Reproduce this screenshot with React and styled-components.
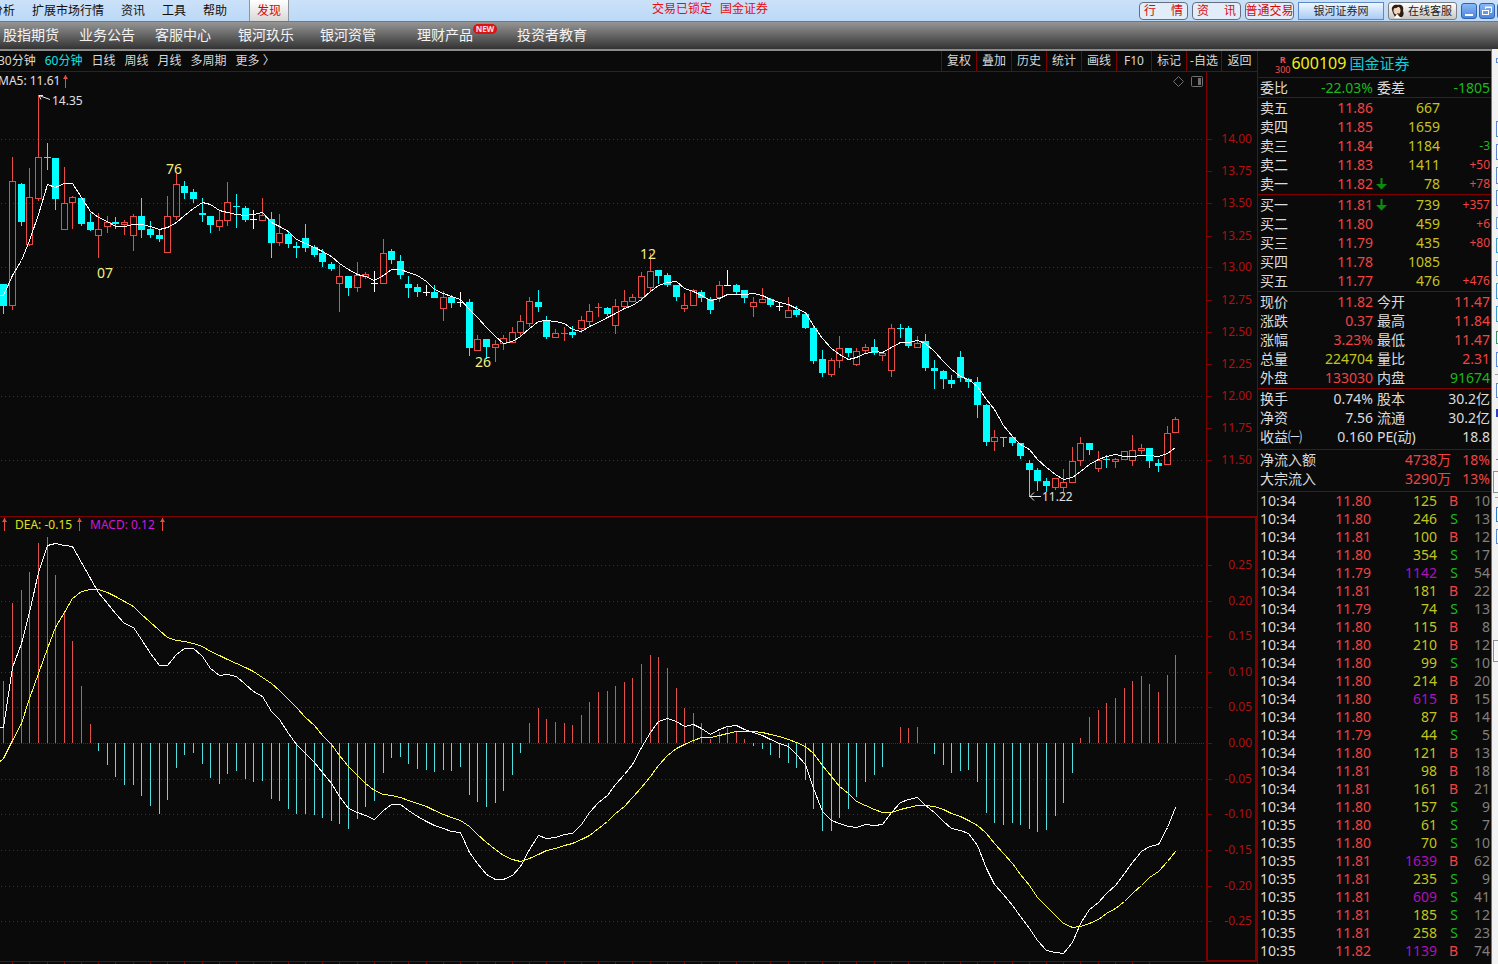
import React from 'react';
import styled, { createGlobalStyle } from 'styled-components';

const GlobalStyle = createGlobalStyle`
  * { box-sizing: border-box; }
  body {
    margin: 0;
    overflow: hidden;
    background: #0a0a0a;
    font-family: 'Noto Sans', 'Noto Sans CJK SC', sans-serif;
    font-size: 12px;
  }
  button { font-family: inherit; cursor: pointer; }
  a { color: inherit; text-decoration: none; }
`;

const Page = styled.div`
  display: flex;
  flex-direction: column;
  height: 100vh;
  overflow: hidden;
`;

/* ---------- top menu ---------- */

const MenuBar = styled.header`
  display: flex;
  flex: none;
  height: 22px;
  color: #101010;
  line-height: 21px;
  white-space: nowrap;
  background: linear-gradient(#cbe1f9, #bcd9f7);
  border-bottom: 1px solid #6f7780;
`;

const MenuList = styled.nav`
  display: flex;
  gap: 17px;
  margin-left: -9px;
`;

const DiscoverTab = styled.a`
  margin-left: 22px;
  padding: 0 7px;
  color: #e00000;
  background: linear-gradient(#ffffff, #d8d8d8);
  border: solid #8c949c;
  border-width: 0 1px;
`;

const Notice = styled.div`
  display: flex;
  flex: 1;
  justify-content: center;
  gap: 8px;
  padding-right: 8px;
  color: #e80c0c;
  line-height: 18px;
`;

const QuickActions = styled.div`
  display: flex;
  align-items: center;
  gap: 4px;
  margin-right: -15px;
`;

const PillButton = styled.button`
  display: flex;
  justify-content: ${p => p.$spread ? 'space-between' : 'center'};
  align-items: center;
  width: 49px;
  height: 18px;
  padding: 0 ${p => p.$spread ? 4 : 0}px;
  color: #d80808;
  font-size: 12px;
  line-height: 16px;
  background: #e2edf9;
  border: 1px solid #66707c;
  border-radius: 4px;
`;

const SiteButton = styled.button`
  width: 86px;
  height: 18px;
  padding: 0;
  color: #1c2430;
  font-size: 11px;
  line-height: 16px;
  background: linear-gradient(#f0f7ff, #a9cbf5);
  border: 1px solid #5b8ac6;
`;

const ServiceButton = styled.button`
  display: flex;
  align-items: center;
  gap: 3px;
  width: 69px;
  height: 18px;
  padding: 0 2px;
  color: #202020;
  font-size: 11px;
  line-height: 16px;
  background: linear-gradient(#ffffff, #c8c8c4);
  border: 1px solid #7c8084;
  border-radius: 3px;
`;

const WindowButtons = styled.div`
  display: flex;
  gap: 2px;
`;

const WindowButton = styled.button`
  width: 16px;
  height: 16px;
  padding: 0;
  line-height: 0;
  background: linear-gradient(#8ab8f4, #4a86dc);
  border: 1px solid #2f62b4;
  border-radius: 3px;
`;

/* ---------- broker navigation ---------- */

const BrokerNav = styled.nav`
  display: flex;
  flex: none;
  height: 29px;
  padding-left: 3px;
  color: #f4f4f4;
  font-size: 14px;
  line-height: 26px;
  white-space: nowrap;
  background: linear-gradient(#969696, #333333);
  border-bottom: 2px solid #8a8a8a;
`;

const BrokerLink = styled.a`
  position: relative;
  margin-right: ${p => p.$gap}px;
`;

const NewBadge = styled.span`
  position: absolute;
  left: 100%;
  top: 2px;
  width: 24px;
  height: 10px;
  color: #ffe0e0;
  font-size: 8px;
  font-weight: 700;
  line-height: 10px;
  text-align: center;
  background: #d81414;
  border-radius: 5px;
`;

/* ---------- body ---------- */

const Body = styled.main`
  display: flex;
  flex: 1;
  min-height: 0;
`;

const ChartColumn = styled.section`
  flex: 1;
  min-width: 0;
`;

const ChartBar = styled.div`
  display: flex;
  justify-content: space-between;
  height: 21px;
  color: #d8d8d8;
  border-bottom: 1px solid #800000;
`;

const Periods = styled.div`
  display: flex;
  gap: 9px;
  margin-left: -2px;
`;

const PeriodButton = styled.button`
  padding: 0;
  color: ${p => p.$active ? '#10e0e0' : 'inherit'};
  font-size: 12px;
  line-height: 20px;
  white-space: nowrap;
  background: none;
  border: 0;
`;

const Tools = styled.div`
  display: flex;
`;

const ToolButton = styled.button`
  width: 35px;
  padding: 0;
  color: #d8d8d8;
  font-size: 12px;
  line-height: 20px;
  white-space: nowrap;
  background: none;
  border: 0;
  border-left: 1px solid #800000;
  &:last-child { width: 36px; }
`;

const Chart = styled.svg`
  display: block;
  width: 100%;
  height: auto;
`;

/* ---------- quote panel ---------- */

const colors = {
  red: '#f04444',
  green: '#1cb81c',
  yellow: '#c4c41c',
  purple: '#b010b8',
  white: '#dcdcdc',
  gray: '#808080'
};

const QuotePanel = styled.aside`
  flex: none;
  width: 234px;
  overflow: hidden;
  font-size: 14px;
  border-left: 1px solid #800000;
`;

const QuoteTitle = styled.h1`
  display: flex;
  align-items: center;
  gap: 3px;
  height: 27px;
  margin: 0;
  padding: 0 0 2px 17px;
  color: #f0f018;
  font-size: 16px;
  font-weight: 400;
  line-height: 24px;
  border-bottom: 1px solid #800000;
`;

const MarginMark = styled.small`
  display: flex;
  flex-direction: column;
  align-items: center;
  margin-right: -2px;
  padding-top: 4px;
  color: #f05050;
  font-size: 9px;
  line-height: 10px;
`;

const StockName = styled.span`
  color: #10ccd8;
  font-size: 15px;
`;

const Block = styled.div`
  padding: 0 1px ${p => p.$tail || 0}px 2px;
  border-bottom: 1px solid #800000;
`;

const Table = styled.table`
  width: 100%;
  table-layout: fixed;
  border-collapse: collapse;
`;

const Cell = styled.td`
  height: ${p => p.$low ? 18 : 19}px;
  padding: 0 0 0 ${p => p.$inset ? 4 : 0}px;
  color: ${p => colors[p.$tone || 'white']};
  font-size: ${p => p.$small ? 12 : 14}px;
  font-weight: 400;
  line-height: 18px;
  text-align: ${p => p.$right ? 'right' : 'left'};
  white-space: nowrap;
`;

const DownArrow = styled.svg`
  display: block;
  margin-left: 3px;
`;

const TickBlock = styled.div`
  padding: 0 1px 0 2px;
`;

const SideStrip = styled.svg`
  flex: none;
  width: 7px;
  height: 915px;
  margin-top: -2px;
  background: #f2f2f2;
`;

/* ---------- data ---------- */

// kind, high, top, bottom, low
const candles = [
  ['c', 284, 284, 306, 314], ['r', 157, 181, 306, 310], ['c', 183, 184, 222, 226], ['r', 168, 197, 245, 246],
  ['r', 95, 157, 199, 201], ['c', 143, 157, 157, 170], ['c', 158, 158, 199, 210], ['r', 167, 203, 230, 230],
  ['r', 196, 197, 203, 229], ['c', 197, 198, 224, 226], ['c', 213, 222, 230, 231], ['r', 213, 229, 236, 258],
  ['r', 216, 222, 227, 233], ['c', 217, 222, 224, 229], ['r', 220, 222, 225, 235], ['r', 214, 216, 236, 251],
  ['c', 198, 216, 230, 238], ['c', 221, 229, 235, 238], ['c', 229, 235, 239, 242], ['r', 196, 216, 253, 253],
  ['r', 174, 184, 217, 220], ['c', 181, 186, 193, 199], ['c', 189, 192, 199, 203], ['c', 198, 213, 215, 222],
  ['c', 216, 216, 225, 233], ['r', 210, 220, 227, 231], ['r', 182, 202, 221, 226], ['c', 194, 206, 206, 228],
  ['c', 206, 208, 220, 222], ['w', 210, 219, 219, 229], ['r', 198, 215, 221, 221], ['c', 212, 219, 243, 258],
  ['r', 214, 233, 243, 246], ['c', 231, 234, 244, 248], ['c', 242, 246, 248, 258], ['c', 224, 238, 248, 252],
  ['c', 245, 247, 255, 257], ['c', 249, 253, 262, 267], ['c', 262, 264, 269, 271], ['r', 265, 276, 284, 312],
  ['c', 276, 276, 288, 296], ['r', 262, 275, 288, 292], ['r', 272, 274, 277, 279], ['w', 271, 283, 283, 292],
  ['r', 239, 253, 284, 284], ['c', 249, 251, 260, 264], ['c', 255, 261, 275, 279], ['c', 276, 284, 288, 298],
  ['c', 284, 287, 292, 297], ['w', 285, 292, 292, 296], ['c', 285, 292, 298, 298], ['r', 291, 297, 309, 321],
  ['c', 295, 297, 303, 308], ['w', 292, 302, 302, 307], ['c', 299, 302, 348, 356], ['r', 335, 339, 351, 351],
  ['c', 339, 339, 347, 359], ['r', 340, 344, 348, 362], ['r', 335, 338, 344, 350], ['r', 327, 332, 343, 343],
  ['r', 315, 321, 333, 336], ['r', 297, 301, 324, 327], ['c', 290, 302, 307, 312], ['c', 316, 320, 337, 339],
  ['r', 329, 333, 338, 338], ['r', 327, 333, 333, 341], ['c', 326, 332, 335, 338], ['r', 316, 320, 329, 333],
  ['r', 304, 311, 322, 326], ['r', 303, 307, 307, 317], ['c', 307, 308, 314, 316], ['r', 299, 306, 326, 334],
  ['r', 290, 301, 307, 309], ['r', 294, 297, 302, 302], ['r', 272, 276, 298, 301], ['r', 253, 271, 288, 291],
  ['c', 270, 270, 276, 284], ['c', 273, 275, 285, 287], ['c', 285, 285, 297, 301], ['r', 293, 305, 309, 312],
  ['r', 289, 290, 306, 306], ['c', 290, 292, 298, 302], ['c', 297, 299, 310, 314], ['r', 281, 285, 298, 302],
  ['w', 270, 285, 285, 286], ['c', 284, 285, 292, 294], ['c', 290, 290, 298, 303], ['r', 297, 302, 307, 317],
  ['r', 288, 299, 303, 303], ['c', 298, 299, 305, 307], ['w', 302, 306, 306, 311], ['r', 297, 310, 318, 318],
  ['c', 306, 310, 315, 317], ['c', 313, 314, 328, 329], ['c', 326, 328, 361, 364], ['c', 350, 359, 373, 377],
  ['r', 358, 360, 375, 377], ['r', 336, 348, 361, 368], ['c', 348, 348, 353, 357], ['r', 348, 351, 365, 366],
  ['r', 344, 347, 351, 353], ['c', 339, 347, 353, 355], ['r', 352, 353, 356, 361], ['r', 324, 328, 371, 377],
  ['c', 324, 328, 328, 338], ['c', 326, 328, 346, 348], ['r', 336, 343, 348, 348], ['c', 334, 341, 368, 371],
  ['c', 360, 368, 371, 389], ['c', 370, 371, 379, 389], ['c', 375, 380, 384, 388], ['c', 351, 357, 378, 382],
  ['c', 378, 379, 382, 388], ['c', 377, 382, 405, 418], ['c', 404, 405, 442, 446], ['r', 430, 437, 442, 451],
  ['c', 437, 437, 437, 447], ['c', 436, 437, 443, 446], ['c', 443, 443, 456, 459], ['c', 460, 463, 470, 497],
  ['c', 468, 470, 481, 491], ['c', 478, 481, 486, 492], ['r', 478, 478, 488, 490], ['r', 469, 482, 488, 492],
  ['r', 447, 461, 483, 483], ['r', 437, 443, 461, 466], ['c', 443, 443, 450, 455], ['r', 451, 460, 469, 472],
  ['c', 455, 459, 459, 468], ['r', 458, 459, 462, 468], ['r', 451, 451, 460, 460], ['r', 435, 450, 461, 466],
  ['r', 444, 448, 451, 454], ['c', 448, 448, 461, 468], ['c', 459, 463, 466, 472], ['r', 426, 433, 465, 465],
  ['r', 417, 419, 433, 433]
];

const ma5 = [
  295, 275, 260, 240, 214, 184, 187, 183, 183, 197, 211, 217, 221, 226, 226, 224, 224, 226, 229, 227,
  222, 215, 208, 202, 204, 210, 212, 214, 215, 214, 212, 222, 226, 231, 239, 243, 247, 251, 256, 263,
  269, 274, 276, 280, 275, 269, 269, 272, 275, 281, 289, 293, 296, 299, 309, 317, 327, 336, 343, 341,
  336, 328, 321, 320, 321, 323, 329, 331, 326, 322, 317, 313, 308, 305, 299, 291, 285, 282, 281, 288,
  291, 295, 300, 298, 294, 294, 294, 293, 295, 299, 302, 304, 308, 312, 325, 338, 348, 354, 359, 357,
  353, 351, 352, 347, 342, 342, 340, 343, 351, 361, 369, 376, 379, 386, 399, 409, 425, 436, 444, 449,
  459, 467, 474, 479, 477, 471, 464, 459, 456, 454, 456, 456, 455, 455, 456, 453, 447
];

const macd = [
  681, 603, 590, 572, 543, 537, 575, 613, 641, 686, 724, 751, 765, 777, 785, 785, 796, 806, 814, 800,
  768, 755, 753, 764, 778, 784, 774, 771, 779, 782, 781, 799, 801, 809, 814, 814, 815, 818, 821, 824,
  829, 819, 807, 801, 773, 758, 757, 764, 769, 770, 772, 770, 771, 767, 795, 802, 807, 803, 791, 775,
  753, 723, 708, 719, 722, 723, 725, 715, 702, 692, 691, 686, 682, 678, 664, 655, 657, 668, 688, 708,
  713, 723, 739, 732, 728, 731, 739, 746, 749, 755, 758, 763, 768, 780, 809, 831, 831, 818, 809, 797,
  782, 775, 767, 743, 727, 728, 727, 743, 754, 765, 773, 771, 770, 782, 813, 823, 825, 823, 825, 829,
  832, 830, 816, 803, 773, 738, 717, 710, 703, 698, 688, 681, 676, 684, 692, 675, 655
];

const dif = [
  727, 667, 643, 612, 572, 545, 543, 545, 546, 562, 578, 592, 603, 613, 623, 627, 639, 653, 665, 665,
  654, 648, 648, 656, 668, 675, 674, 676, 684, 691, 696, 711, 719, 733, 744, 753, 762, 772, 783, 796,
  808, 812, 815, 819, 810, 804, 804, 810, 816, 821, 825, 828, 831, 832, 852, 863, 874, 879, 879, 875,
  866, 849, 835, 838, 837, 834, 833, 824, 812, 802, 795, 784, 774, 764, 747, 732, 721, 718, 721, 726,
  724, 728, 734, 729, 726, 725, 729, 732, 735, 739, 743, 746, 754, 764, 788, 811, 820, 823, 826, 827,
  824, 825, 824, 812, 802, 799, 797, 805, 812, 821, 828, 830, 833, 845, 868, 884, 894, 905, 916, 928,
  940, 950, 952, 953, 942, 923, 909, 902, 893, 885, 873, 862, 851, 846, 844, 827, 807
];

const dea = [
  758, 740, 723, 698, 673, 648, 627, 612, 598, 591, 589, 589, 592, 596, 601, 606, 614, 622, 630, 637,
  640, 641, 643, 646, 651, 655, 659, 663, 667, 671, 677, 683, 690, 699, 707, 717, 725, 735, 744, 755,
  766, 775, 783, 790, 794, 795, 797, 800, 803, 806, 810, 814, 817, 820, 826, 834, 842, 849, 855, 859,
  861, 858, 854, 850, 848, 845, 843, 839, 835, 828, 821, 813, 806, 797, 787, 776, 765, 755, 748, 744,
  740, 737, 737, 735, 733, 731, 731, 731, 732, 734, 736, 739, 742, 746, 753, 765, 776, 786, 793, 801,
  805, 809, 812, 812, 809, 807, 805, 805, 806, 809, 813, 816, 820, 825, 833, 843, 853, 863, 874, 885,
  897, 906, 915, 923, 927, 926, 923, 919, 913, 908, 901, 893, 885, 877, 871, 861, 851
];

const priceAxis = [
  ['14.00', 139], ['13.75', 171], ['13.50', 203], ['13.25', 236], ['13.00', 267], ['12.75', 300],
  ['12.50', 332], ['12.25', 364], ['12.00', 396], ['11.75', 428], ['11.50', 460]
];

const macdAxis = [
  ['0.25', 565], ['0.20', 601], ['0.15', 636], ['0.10', 672], ['0.05', 707], ['0.00', 743],
  ['-0.05', 779], ['-0.10', 814], ['-0.15', 850], ['-0.20', 886], ['-0.25', 921]
];

const asks = [
  ['卖五', '11.86', '667', ''],
  ['卖四', '11.85', '1659', ''],
  ['卖三', '11.84', '1184', '-3'],
  ['卖二', '11.83', '1411', '+50'],
  ['卖一', '11.82', '78', '+78', true]
];

const bids = [
  ['买一', '11.81', '739', '+357', true],
  ['买二', '11.80', '459', '+6'],
  ['买三', '11.79', '435', '+80'],
  ['买四', '11.78', '1085', ''],
  ['买五', '11.77', '476', '+476']
];

const ratio = [['委比', '-22.03%', 'green', '委差', '-1805', 'green']];

const summary = [
  ['现价', '11.82', 'red', '今开', '11.47', 'red'],
  ['涨跌', '0.37', 'red', '最高', '11.84', 'red'],
  ['涨幅', '3.23%', 'red', '最低', '11.47', 'red'],
  ['总量', '224704', 'yellow', '量比', '2.31', 'red'],
  ['外盘', '133030', 'red', '内盘', '91674', 'green']
];

const fundamentals = [
  ['换手', '0.74%', 'white', '股本', '30.2亿', 'white'],
  ['净资', '7.56', 'white', '流通', '30.2亿', 'white'],
  ['收益㈠', '0.160', 'white', 'PE(动)', '18.8', 'white']
];

const flows = [
  ['净流入额', '4738万', '18%'],
  ['大宗流入', '3290万', '13%']
];

const ticks = [
  ['10:34', '11.80', 125, 'B', 10], ['10:34', '11.80', 246, 'S', 13], ['10:34', '11.81', 100, 'B', 12],
  ['10:34', '11.80', 354, 'S', 17], ['10:34', '11.79', 1142, 'S', 54], ['10:34', '11.81', 181, 'B', 22],
  ['10:34', '11.79', 74, 'S', 13], ['10:34', '11.80', 115, 'B', 8], ['10:34', '11.80', 210, 'B', 12],
  ['10:34', '11.80', 99, 'S', 10], ['10:34', '11.80', 214, 'B', 20], ['10:34', '11.80', 615, 'B', 15],
  ['10:34', '11.80', 87, 'B', 14], ['10:34', '11.79', 44, 'S', 5], ['10:34', '11.80', 121, 'B', 13],
  ['10:34', '11.81', 98, 'B', 18], ['10:34', '11.81', 161, 'B', 21], ['10:34', '11.80', 157, 'S', 9],
  ['10:35', '11.80', 61, 'S', 7], ['10:35', '11.80', 70, 'S', 10], ['10:35', '11.81', 1639, 'B', 62],
  ['10:35', '11.81', 235, 'S', 9], ['10:35', '11.81', 609, 'S', 41], ['10:35', '11.81', 185, 'S', 12],
  ['10:35', '11.81', 258, 'S', 23], ['10:35', '11.82', 1139, 'B', 74], ['10:35', '11.80', 479, 'S', 36]
];

const brokerLinks = [
  ['股指期货', 20], ['业务公告', 20], ['客服中心', 27], ['银河玖乐', 26],
  ['银河资管', 41], ['理财产品', 44, true], ['投资者教育', 0]
];

const periods = ['30分钟', '60分钟', '日线', '周线', '月线', '多周期', '更多 〉'];
const tools = ['复权', '叠加', '历史', '统计', '画线', 'F10', '标记', '-自选', '返回'];

// y, height, colour of the icons peeking out of the docked toolbar
const stripIcons = [
  [121, 15, '#5b86c8'], [144, 15, '#5b86c8'], [167, 16, '#5b86c8'], [190, 15, '#5b86c8'],
  [217, 11, '#6c9cd8'], [238, 14, '#3c98c8'], [261, 14, '#5b86c8'], [283, 15, '#3c98c8'],
  [306, 15, '#3c98c8'], [331, 12, '#3c8c64'], [352, 14, '#5b86d0'], [383, 14, '#5b86c8'],
  [507, 14, '#2c7cc8'], [529, 14, '#5b86d0']
];

/* ---------- charts ---------- */

const barX = i => Math.round(3.46 + 8.616 * i);
const toPoints = series => series.map((y, i) => `${barX(i) + 0.5},${y + 0.5}`).join(' ');
const candleColors = { r: '#e84c44', c: '#00ffff', w: '#ffffff' };

function Candle({ x, row }){
  const [kind, high, top, bottom, low] = row;
  const color = candleColors[kind];
  if(top === bottom){
    return (
      <g fill={color}>
        <rect x={x} y={high} width="1" height={low - high} />
        <rect x={x - 3} y={top} width="7" height="1" />
      </g>
    );
  }
  if(kind === 'r'){
    return (
      <g fill={color}>
        <rect x={x} y={high} width="1" height={top - high} />
        <rect x={x} y={bottom} width="1" height={low - bottom} />
        <rect x={x - 2.5} y={top + 0.5} width="6" height={bottom - top - 1} fill="none" stroke={color} />
      </g>
    );
  }
  return (
    <g fill={color}>
      <rect x={x} y={high} width="1" height={low - high} />
      <rect x={x - 3} y={top} width="7" height={bottom - top} />
    </g>
  );
}

function Axis({ marks }){
  return marks.map(([label, y]) => (
    <g key={label}>
      <rect x="1207" y={y} width="5" height="1" fill="#800000" />
      <text x="1252" y={y + 4} textAnchor="end" fontSize="12" fill="#b01010">{label}</text>
    </g>
  ));
}

function GridLine({ y, dense }){
  return <line x1="1" x2="1205" y1={y + 0.5} y2={y + 0.5} stroke="#a00808" strokeDasharray={dense ? '1 1' : '1 3'} />;
}

function UpMark({ x, y }){
  return (
    <g fill="#e84c44">
      <rect x={x} y={y} width="1" height="13" />
      <path d={`M${x - 2} ${y + 4}L${x + 0.5} ${y}L${x + 3} ${y + 4}Z`} />
    </g>
  );
}

function PriceChart(){
  return (
    <Chart viewBox="0 72 1257 444" role="img" aria-label="60分钟K线">
      <g shapeRendering="crispEdges">
        {priceAxis.filter((m, i) => i % 2 === 0).map(([label, y]) => <GridLine key={label} y={y} />)}
        <rect x="1206" y="72" width="1" height="444" fill="#800000" />
        {candles.map((row, i) => <Candle key={i} x={barX(i)} row={row} />)}
        <polyline points={`0,295.5 ${toPoints(ma5)}`} fill="none" stroke="#ffffff" />
      </g>
      <Axis marks={priceAxis} />
      <text x="-2" y="85" fontSize="12" fill="#e0e0e0">MA5: 11.61</text>
      <UpMark x={65} y={75} />
      <g fill="none" stroke="#e8e8e8">
        <path d="M39 95.5L50 99.5M39 95.5h4M39 95.5l2 4" />
        <path d="M1030 496.5h11M1034 492.5l-4 4l4 4" />
      </g>
      <g fontSize="12" fill="#e0e0e0">
        <text x="52" y="105">14.35</text>
        <text x="1042" y="501">11.22</text>
      </g>
      <g fontSize="14" fill="#f0f080">
        <text x="166" y="174">76</text>
        <text x="97" y="278">07</text>
        <text x="475" y="367">26</text>
        <text x="640" y="259">12</text>
      </g>
      <g fill="none" stroke="#707070">
        <path d="M1178.5 76.5l5 5l-5 5l-5-5z" />
        <rect x="1191.5" y="76.5" width="11" height="10" rx="1" />
        <rect x="1198" y="78" width="3" height="7" fill="#707070" stroke="none" />
      </g>
    </Chart>
  );
}

function MacdChart(){
  return (
    <Chart viewBox="0 516 1257 448" role="img" aria-label="MACD">
      <g shapeRendering="crispEdges">
        <rect x="0" y="516" width="1257" height="1" fill="#800000" />
        {macdAxis.map(([label, y]) => <GridLine key={label} y={y} dense={label === '0.00'} />)}
        <rect x="1207" y="517" width="49" height="444" fill="none" stroke="#800000" strokeWidth="2" />
        <rect x="0" y="961" width="1257" height="1" fill="#800000" />
        {macd.map((y, i) => (
          <rect
            key={i}
            x={barX(i)}
            y={Math.min(y, 743)}
            width="1"
            height={Math.abs(y - 743)}
            fill={y < 743 ? '#e0504c' : '#50e0e0'}
          />
        ))}
        {macd.map((y, i) => i % 2 && i < 134
          ? <rect key={i} x={barX(i)} y="962" width="1" height="2" fill="#800000" />
          : null)}
        <polyline points={`0,727.5 ${toPoints(dif)}`} fill="none" stroke="#ffffff" />
        <polyline points={`0,761.5 ${toPoints(dea)}`} fill="none" stroke="#ffff40" />
      </g>
      <Axis marks={macdAxis} />
      <UpMark x={4} y={518} />
      <text x="15" y="529" fontSize="12" fill="#e0e020">DEA: -0.15</text>
      <UpMark x={79} y={518} />
      <text x="90" y="529" fontSize="12" fill="#d018d8">MACD: 0.12</text>
      <UpMark x={162} y={518} />
    </Chart>
  );
}

/* ---------- panel tables ---------- */

function Depth({ rows }){
  return (
    <Table>
      <colgroup>
        <col width="56" /><col width="57" /><col width="16" /><col width="51" /><col />
      </colgroup>
      <tbody>
        {rows.map(([label, price, volume, change, moved]) => (
          <tr key={label}>
            <Cell as="th" scope="row">{label}</Cell>
            <Cell $right $tone="red">{price}</Cell>
            <Cell>
              {moved ? (
                <DownArrow width="11" height="12" viewBox="0 0 11 12" fill="#0c8c0c">
                  <path d="M4.5 0h2v6H11L5.5 11.5L0 6h4.5z" />
                </DownArrow>
              ) : null}
            </Cell>
            <Cell $right $tone="yellow">{volume}</Cell>
            <Cell $right $small $tone={change[0] === '-' ? 'green' : 'red'}>{change}</Cell>
          </tr>
        ))}
      </tbody>
    </Table>
  );
}

function Pairs({ rows }){
  return (
    <Table>
      <colgroup>
        <col width="56" /><col width="57" /><col width="50" /><col />
      </colgroup>
      <tbody>
        {rows.map(([label, value, tone, label2, value2, tone2]) => (
          <tr key={label}>
            <Cell as="th" scope="row">{label}</Cell>
            <Cell $right $tone={tone}>{value}</Cell>
            <Cell as="th" scope="row" $inset>{label2}</Cell>
            <Cell $right $tone={tone2}>{value2}</Cell>
          </tr>
        ))}
      </tbody>
    </Table>
  );
}

function Flows(){
  return (
    <Table>
      <colgroup>
        <col width="113" /><col width="78" /><col />
      </colgroup>
      <tbody>
        {flows.map(([label, amount, share]) => (
          <tr key={label}>
            <Cell as="th" scope="row">{label}</Cell>
            <Cell $right $tone="red">{amount}</Cell>
            <Cell $right $tone="red">{share}</Cell>
          </tr>
        ))}
      </tbody>
    </Table>
  );
}

function Ticks(){
  return (
    <Table>
      <colgroup>
        <col width="56" /><col width="55" /><col width="66" /><col width="21" /><col />
      </colgroup>
      <tbody>
        {ticks.map(([time, price, volume, side, count], i) => (
          <tr key={i}>
            <Cell $low>{time}</Cell>
            <Cell $low $right $tone="red">{price}</Cell>
            <Cell $low $right $tone={volume > 500 ? 'purple' : 'yellow'}>{volume}</Cell>
            <Cell $low $right $tone={side === 'B' ? 'red' : 'green'}>{side}</Cell>
            <Cell $low $right $tone="gray">{count}</Cell>
          </tr>
        ))}
      </tbody>
    </Table>
  );
}

function TopMenu(){
  return (
    <MenuBar>
      <MenuList>
        {['分析', '扩展市场行情', '资讯', '工具', '帮助'].map(name => <a href="#" key={name}>{name}</a>)}
      </MenuList>
      <DiscoverTab href="#">发现</DiscoverTab>
      <Notice>
        <span>交易已锁定</span>
        <span>国金证券</span>
      </Notice>
      <QuickActions>
        <PillButton $spread><span>行</span><span>情</span></PillButton>
        <PillButton $spread><span>资</span><span>讯</span></PillButton>
        <PillButton>普通交易</PillButton>
        <SiteButton>银河证券网</SiteButton>
        <ServiceButton>
          <svg width="14" height="14" viewBox="0 0 14 14">
            <path d="M1 6C0 2 4 0 7 1C11 0 13 3 12 7C13 9 13 11 11 13H4L2 9Z" fill="#2c1c14" />
            <ellipse cx="6" cy="6.500" rx="3.500" ry="4" fill="#f4d4b8" />
            <path d="M2 4C5 5 7 3 8 2L10 5L8 1H4Z" fill="#2c1c14" />
            <path d="M3 14L6 10L10 14Z" fill="#ffffff" />
            <path d="M6 9.500H9" stroke="#b46040" />
          </svg>
          在线客服
        </ServiceButton>
        <WindowButtons>
          <WindowButton aria-label="最小化">
            <svg width="14" height="14"><path d="M3 10h8v2H3z" fill="#fff" /></svg>
          </WindowButton>
          <WindowButton aria-label="还原">
            <svg width="14" height="14" fill="none" stroke="#fff">
              <path d="M5.500 5V3.500h6v5H10M5 3h7" />
              <rect x="2.500" y="6.500" width="6" height="4" />
            </svg>
          </WindowButton>
          <WindowButton aria-label="关闭">
            <svg width="14" height="14"><path d="M4 4l6 6M10 4l-6 6" stroke="#fff" strokeWidth="2" /></svg>
          </WindowButton>
        </WindowButtons>
      </QuickActions>
    </MenuBar>
  );
}

function DockedStrip(){
  return (
    <SideStrip viewBox="1491 49 7 915" shapeRendering="crispEdges">
      <rect x="1491" y="49" width="1" height="915" fill="#787470" />
      <path d="M1498 58.500h-1.500v4h1.500" fill="none" stroke="#5b86c8" />
      {stripIcons.map(([y, h, color]) => (
        <rect key={y} x="1496.5" y={y + 0.5} width="6" height={h} fill="#ffffff" stroke={color} />
      ))}
      <rect x="1496" y="409" width="2" height="8" fill="#3040b8" />
      <rect x="1496" y="459" width="2" height="1" fill="#5b86c8" />
      <rect x="1495" y="374" width="3" height="1" fill="#a0a0a0" />
      <rect x="1495" y="497" width="3" height="1" fill="#a0a0a0" />
      <rect x="1493.5" y="471.500" width="8" height="21" fill="#f8f8f8" stroke="#909090" />
      <rect x="1493.5" y="640.500" width="8" height="21" fill="#f8f8f8" stroke="#909090" />
    </SideStrip>
  );
}

function App(){
  return (
    <Page>
      <GlobalStyle />
      <TopMenu />
      <BrokerNav>
        {brokerLinks.map(([name, gap, fresh]) => (
          <BrokerLink href="#" key={name} $gap={gap}>
            {name}
            {fresh ? <NewBadge>NEW</NewBadge> : null}
          </BrokerLink>
        ))}
      </BrokerNav>
      <Body>
        <ChartColumn>
          <ChartBar>
            <Periods>
              {periods.map(name => <PeriodButton key={name} $active={name === '60分钟'}>{name}</PeriodButton>)}
            </Periods>
            <Tools>
              {tools.map(name => <ToolButton key={name}>{name}</ToolButton>)}
            </Tools>
          </ChartBar>
          <PriceChart />
          <MacdChart />
        </ChartColumn>
        <QuotePanel>
          <QuoteTitle>
            <MarginMark><b>R</b><span>300</span></MarginMark>
            600109
            <StockName>国金证券</StockName>
          </QuoteTitle>
          <Block><Pairs rows={ratio} /></Block>
          <Block $tail={1}><Depth rows={asks} /></Block>
          <Block $tail={1}><Depth rows={bids} /></Block>
          <Block $tail={1}><Pairs rows={summary} /></Block>
          <Block $tail={3}><Pairs rows={fundamentals} /></Block>
          <Block $tail={3}><Flows /></Block>
          <TickBlock><Ticks /></TickBlock>
        </QuotePanel>
        <DockedStrip />
      </Body>
    </Page>
  );
}

export default App;
